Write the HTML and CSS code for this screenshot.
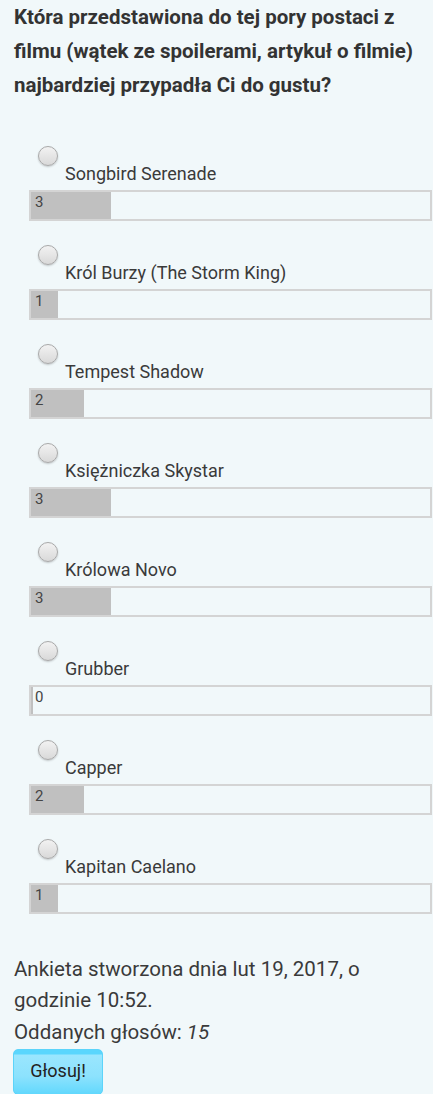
FILE: index.html
```html
<!DOCTYPE html>
<html lang="pl">
<head>
<meta charset="utf-8">
<title>Ankieta</title>
<link rel="stylesheet" href="styles.css">
</head>
<body>
<div class="poll">
  <h1 class="question">Która przedstawiona do tej pory postaci z filmu (wątek ze spoilerami, artykuł o filmie) najbardziej przypadła Ci do gustu?</h1>
  <ul class="options">
    <li class="option">
      <span class="radio"></span>
      <span class="label">Songbird Serenade</span>
      <div class="bar"><div class="fill" style="width:20%"></div><span class="count">3</span></div>
    </li>
    <li class="option">
      <span class="radio"></span>
      <span class="label">Król Burzy (The Storm King)</span>
      <div class="bar"><div class="fill" style="width:6.67%"></div><span class="count">1</span></div>
    </li>
    <li class="option">
      <span class="radio"></span>
      <span class="label">Tempest Shadow</span>
      <div class="bar"><div class="fill" style="width:13.33%"></div><span class="count">2</span></div>
    </li>
    <li class="option">
      <span class="radio"></span>
      <span class="label">Księżniczka Skystar</span>
      <div class="bar"><div class="fill" style="width:20%"></div><span class="count">3</span></div>
    </li>
    <li class="option">
      <span class="radio"></span>
      <span class="label">Królowa Novo</span>
      <div class="bar"><div class="fill" style="width:20%"></div><span class="count">3</span></div>
    </li>
    <li class="option">
      <span class="radio"></span>
      <span class="label">Grubber</span>
      <div class="bar"><div class="fill" style="width:0.6%"></div><span class="count">0</span></div>
    </li>
    <li class="option">
      <span class="radio"></span>
      <span class="label">Capper</span>
      <div class="bar"><div class="fill" style="width:13.33%"></div><span class="count">2</span></div>
    </li>
    <li class="option">
      <span class="radio"></span>
      <span class="label">Kapitan Caelano</span>
      <div class="bar"><div class="fill" style="width:6.67%"></div><span class="count">1</span></div>
    </li>
  </ul>
  <p class="meta">Ankieta stworzona dnia lut 19, 2017, o godzinie 10:52.</p>
  <p class="meta">Oddanych głosów: <em>15</em></p>
  <button class="vote" type="button">Głosuj!</button>
</div>
</body>
</html>
```

FILE: styles.css
```css
html, body {
  margin: 0;
  padding: 0;
  background: #f1f8fa;
}

body {
  font-family: Roboto, "Liberation Sans", sans-serif;
  color: #333;
}

.poll {
  padding: 0 1px 0 14px;
}

.question {
  margin: 0;
  padding-top: 0;
  font-size: 20.5px;
  font-weight: bold;
  line-height: 34px;
  color: #333;
}

.options {
  list-style: none;
  margin: 44px 0 0 0;
  padding: 0 0 0 15px;
}

.option {
  display: flex;
  flex-direction: column;
  align-items: flex-start;
  margin-bottom: 24px;
}

.option:last-child {
  margin-bottom: 0;
}

.radio {
  display: block;
  width: 18px;
  height: 18px;
  margin-left: 9px;
  margin-bottom: -2px;
  border: 1px solid #a9a9a9;
  border-radius: 50%;
  background: linear-gradient(#f2f2f2, #d9d9d9);
  box-shadow: 0 1px 2px rgba(0, 0, 0, 0.2);
}

.label {
  display: block;
  margin-left: 36px;
  font-size: 18px;
  line-height: 20px;
  color: #3a3a3a;
}

.bar {
  position: relative;
  align-self: stretch;
  box-sizing: border-box;
  height: 31px;
  margin-top: 6px;
  border: 2px solid #d4d4d4;
  background: #f1f8fa;
}

.fill {
  height: 100%;
  background: #c0c0c0;
}

.count {
  position: absolute;
  left: 4px;
  top: 2px;
  font-size: 15px;
  line-height: 16px;
  color: #444;
}

.meta {
  margin: 0;
  font-size: 20.5px;
  line-height: 31px;
  color: #3a3a3a;
}

.options + .meta {
  margin-top: 40px;
}

.meta + .meta {
  margin-top: 1px;
}

.meta em {
  font-style: italic;
}

.vote {
  display: block;
  margin: 1px 0 0 -1px;
  width: 90px;
  height: 46px;
  padding: 0 0 4px 0;
  border: 1px solid #5cd4fa;
  border-radius: 5px;
  background: linear-gradient(#5ad6fd 0, #5ad6fd 4px, #9ae6fe 5px, #8ce2fd 60%, #62d8fd 100%);
  font-family: Roboto, "Liberation Sans", sans-serif;
  font-size: 18px;
  color: #222;
}
```
